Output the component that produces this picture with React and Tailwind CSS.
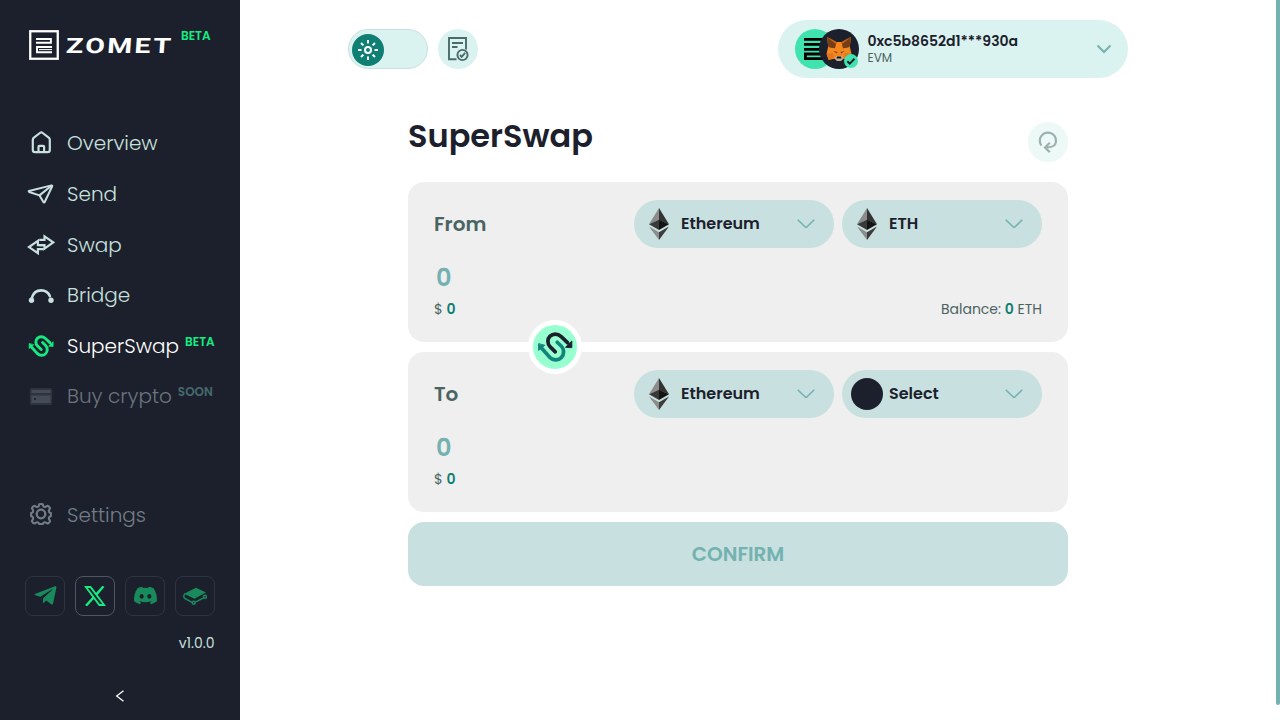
import React from 'react';
import { FaTelegramPlane, FaDiscord } from 'react-icons/fa';

function LogoMark() {
  return (
    <svg width="30" height="30" viewBox="0 0 30 30" fill="none" stroke="#fff">
      <rect x="1.25" y="1.25" width="27.5" height="27.5" strokeWidth="2.3" />
      <path d="M7 9h14.900v3.800H7M23 17H8v5.200h15" strokeWidth="1.900" />
      <path d="M10 19.600h13" strokeWidth="1" />
    </svg>
  );
}

function HomeIcon() {
  return (
    <svg width="28" height="28" viewBox="0 0 28 28" fill="none" stroke="currentColor" strokeWidth="2.200" strokeLinejoin="round">
      <path d="M5.800 11c0-1 .3-1.700 1.100-2.300l6-4.700c.9-.7 1.900-.7 2.800 0l6 4.700c.8.600 1.100 1.300 1.100 2.300V21c0 1.300-.9 2.200-2.200 2.200H8c-1.300 0-2.200-.9-2.200-2.200z" />
      <path d="M11.500 23v-5.200c0-.6.400-1 1-1h3.600c.6 0 1 .4 1 1V23" />
    </svg>
  );
}

function SendIcon() {
  return (
    <svg width="28" height="28" viewBox="0 0 28 28" fill="none" stroke="currentColor" strokeWidth="2" strokeLinejoin="round" strokeLinecap="round">
      <path d="M2 11 24.500 5.400c.6-.1.900.4.700.9L17.700 22c-.3.600-1 .5-1.300 0l-3.900-6.600L2.200 12c-.6-.2-.6-.8-.2-1z" />
      <path d="M12.500 15.400 24.400 5.700" />
    </svg>
  );
}

function SwapIcon() {
  return (
    <svg width="28" height="28" viewBox="0 0 28 28" fill="none" stroke="currentColor" strokeWidth="2.200" strokeLinejoin="miter">
      <path d="M12.200 8.900h5.300V5.300l8.700 6.100-8.700 6.200v-3.500H12" />
      <path d="M16.800 18.200h-5.900v4L2 16.100l8.900-6.300v4.300h6" />
    </svg>
  );
}

function BridgeIcon() {
  return (
    <svg width="28" height="28" viewBox="0 0 28 28" fill="none" stroke="currentColor" strokeWidth="2.600">
      <path d="M4.500 17.800C6 12 9.500 9.400 14.300 9.400c3.900 0 7 2 8.600 5.800" strokeLinecap="round" />
      <circle cx="4.500" cy="19.300" r="2.700" fill="currentColor" stroke="none" />
      <circle cx="24" cy="19.300" r="2.700" fill="currentColor" stroke="none" />
    </svg>
  );
}

function SuperSwapIcon({ size, top, bottom, weight }) {
  return (
    <svg width={size} height={size} viewBox="0 0 36 36" fill="none" strokeWidth={weight} strokeLinecap="round">
      <path d="M18.300 22.800 13.200 17.900C11.500 16.300 10.900 14.500 10.900 12.300C10.900 8.200 14.200 5.100 18.200 5.100C20.500 5.100 22.500 6 24.200 7.600L30.500 13.700" stroke={top} />
      <path d="M34.800 18.300V12l-6 6z" fill={top} stroke={top} strokeWidth="1" strokeLinejoin="round" />
      <path d="M20.200 13.200 24.400 17.300C25.900 18.800 26.600 20.500 26.600 22.700C26.600 27.200 23.300 30.900 19 30.900C16.500 30.900 14.500 30 12.700 28.200L4.700 19.300" stroke={bottom} />
      <path d="M1.600 15v6.400l6-4.900z" fill={bottom} stroke={bottom} strokeWidth="1" strokeLinejoin="round" />
    </svg>
  );
}

function CardIcon() {
  return (
    <svg width="28" height="28" viewBox="0 0 28 28">
      <rect x="2.800" y="6" width="22.400" height="17" rx="2" fill="#2e343f" />
      <path d="M4.500 8h19v3h-19zM4.500 13.500h19V21h-19z" fill="#454b57" />
      <rect x="7" y="16" width="1.800" height="1.800" fill="#1c202c" />
    </svg>
  );
}

function GearIcon() {
  return (
    <svg width="26" height="26" viewBox="1 2.300 26 26" fill="none" stroke="currentColor" strokeWidth="2.300" strokeLinejoin="round" className="ml-px -mt-0.5">
      <path d="M12 4.500q2-.8 4 0l.6 2.300q1.100 1 2.600.5l2.100-1.200q2 .8 2.800 2.800l-1.200 2.100q-.4 1.500.5 2.600l1.600.6v3.600l-1.700.6q-.9 1.100-.4 2.600l1.200 2.100q-.8 2-2.800 2.800l-2.100-1.200q-1.500-.5-2.600.5l-.6 1.300h-4l-.6-1.300q-1.100-1-2.600-.5l-2.100 1.200q-2-.8-2.800-2.800l1.200-2.100q.5-1.500-.4-2.600l-1.700-.6v-3.600l1.600-.6q.9-1.100.5-2.600L3.900 8.900q.8-2 2.800-2.800l2.100 1.200q1.500.5 2.600-.5z" transform="translate(1.400 1.530) scale(.9)" />
      <circle cx="14" cy="15.300" r="4.300" />
    </svg>
  );
}

function XIcon() {
  return (
    <svg width="22" height="20" viewBox="0 0 22 20" fill="none" stroke="currentColor">
      <path d="M1.900 1h4.600l13.600 18h-4.700z" strokeWidth="1.900" />
      <path d="M19.500.300 12.200 8.600M9.500 11.500 2 19.800" strokeWidth="2.400" />
    </svg>
  );
}

function GitbookIcon() {
  return (
    <svg width="24" height="18" viewBox="0 0 24 18" fill="none" stroke="currentColor" strokeWidth="1.500" strokeLinejoin="round">
      <path d="M1 6.800 13 .800l10 4.700L11.500 11.800z" fill="currentColor" stroke="none" />
      <path d="M2 7C.300 7.900.400 10.600 2 11.500l7 3.800M12.300 15.200l8.400-4.400" />
      <circle cx="10.700" cy="15.700" r="1.500" />
      <circle cx="22" cy="9.700" r="1.500" />
    </svg>
  );
}

function Eth() {
  return (
    <svg width="32" height="32" viewBox="0 0 32 32" className="shrink-0">
      <path d="m16 0-10 16.300L16 12z" fill="#8c8c8c" />
      <path d="m16 0 10 16.300L16 12z" fill="#343434" />
      <path d="M6 16.300 16 11.800v10.300z" fill="#393939" />
      <path d="M26 16.300 16 11.800v10.300z" fill="#141414" />
      <path d="m6 18.400 10 5.900V32z" fill="#8c8c8c" />
      <path d="m26 18.400-10 5.900V32z" fill="#3c3c3b" />
    </svg>
  );
}

function Chevron() {
  return (
    <svg width="18" height="10" viewBox="0 0 18 10" fill="none" stroke="#73b2b0" strokeWidth="1.600" strokeLinecap="round" strokeLinejoin="round" className="ml-auto">
      <path d="m1.200 1.200 6.800 6.600q1 .8 2 0l6.800-6.600" />
    </svg>
  );
}

function Fox() {
  return (
    <svg width="26" height="26" viewBox="0 0 26 26">
      <path d="M1 1 10.500 6h5L25 1l-1.200 9.500L25.500 18l-2 6-6-1.300-2.500 2h-4l-2.500-2L2.500 24l-2-6 1.700-7.500z" fill="#f6851b" />
      <path d="M1 .800 10.500 6 9 12.500l-5.300-.800-1.500-1.700zM25 .800 15.500 6 17 12.500l5.300-.800 1.500-1.700z" fill="#763d16" />
      <path d="m1 1 9.500 5-1 1.700zM25 1l-9.500 5 1 1.700z" fill="#c4661b" />
      <path d="M3.500 11.600 9 12.500 7 17l-6 1zM22.500 11.600 17 12.500l2 4.500 6 1z" fill="#f08a22" />
      <path d="m7 17 .8 5-5 1.800-2-6zM19 17l-.8 5 5 1.800 2-6z" fill="#e4761b" />
      <path d="m7.500 15 4 1-.8 1.500zM18.500 15l-4 1 .8 1.500z" fill="#5d4a35" />
      <path d="m8.500 22 2-2h5l2 2-2.500 3h-4z" fill="#c0ad9e" />
      <path d="M11 20.500h4l.5 2h-5z" fill="#161616" />
    </svg>
  );
}

function Select({ label, token }) {
  return (
    <button className="flex h-12 w-[200px] items-center rounded-full bg-[#c8e0df] pl-[9px] pr-[19px] text-[16px] font-semibold text-[#1c202c]">
      {token ? <Eth /> : <span className="h-8 w-8 shrink-0 rounded-full bg-[#1c202c]" />}
      <span className="ml-[6px]">{label}</span>
      <Chevron />
    </button>
  );
}

function SwapPanel({ title, asset, balance }) {
  return (
    <section className="h-[160px] rounded-[16px] bg-[#efefef] px-[26px] pt-[18px]">
      <div className="flex h-12 items-center">
        <h2 className="flex-1 text-[20px] font-semibold text-[#4a6462]">{title}</h2>
        <div className="flex gap-2">
          <Select label="Ethereum" token />
          <Select label={asset} token={asset === 'ETH'} />
        </div>
      </div>
      <div className="mt-[12px] flex h-9 items-center pl-[2px] text-[24px] font-semibold text-[#73b2b0]">0</div>
      <div className="mt-[3px] flex h-[20px] items-center justify-between text-[14px] text-[#4a6462]">
        <p>$ <b className="font-semibold text-[#0f7f73]">0</b></p>
        {balance && <p>Balance: <b className="font-semibold text-[#0f7f73]">0</b> ETH</p>}
      </div>
    </section>
  );
}

function NavItem({ icon, label, tone, badge, badgeTone }) {
  return (
    <a className={`flex h-[50.6px] items-center ${tone}`}>
      <span className="flex w-[40px] shrink-0">{icon}</span>
      <span className="text-[20px] font-light leading-[30px]">{label}</span>
      {badge && <span className={`mb-[8px] ml-[6px] text-[12px] font-semibold ${badgeTone}`}>{badge}</span>}
    </a>
  );
}

function Sidebar() {
  return (
    <aside className="flex h-full w-[240px] shrink-0 flex-col bg-[#1c202c]">
      <div className="flex h-[90px] items-start pl-[29px] pt-[30px]">
        <LogoMark />
        <div className="ml-[7px] w-[115px] pt-[4.500px]">
          <span className="block w-[70px] origin-left scale-x-[1.360] -skew-x-3 font-['Roboto',sans-serif] text-[21px] font-bold leading-[22px] tracking-[1.700px] text-white">ZOMET</span>
        </div>
        <span className="mt-[-3px] text-[12px] font-semibold leading-[18px] text-[#14ec82]">BETA</span>
      </div>
      <nav className="flex flex-col pl-[27px] pt-[28.100px]">
        <NavItem icon={<HomeIcon />} label="Overview" tone="text-[#c8e0df]" />
        <NavItem icon={<SendIcon />} label="Send" tone="text-[#c8e0df]" />
        <NavItem icon={<SwapIcon />} label="Swap" tone="text-[#c8e0df]" />
        <NavItem icon={<BridgeIcon />} label="Bridge" tone="text-[#c8e0df]" />
        <NavItem icon={<span className="pl-px"><SuperSwapIcon size={26} top="#14ec82" bottom="#14ec82" weight={4} /></span>} label="SuperSwap" tone="text-white" badge="BETA" badgeTone="text-[#14ec82]" />
        <NavItem icon={<CardIcon />} label="Buy crypto" tone="text-[#6c747e]" badge="SOON" badgeTone="text-[#456a6e]" />
        <div className="h-[68px]" />
        <NavItem icon={<GearIcon />} label="Settings" tone="text-[#727e87]" />
      </nav>
      <div className="mt-[35.400px] flex gap-[10px] px-[25px] text-[#198a5b]">
        <a className="flex h-10 w-10 items-center justify-center rounded-[8px] border border-[#303440]"><FaTelegramPlane size={25} /></a>
        <a className="flex h-10 w-10 items-center justify-center rounded-[8px] border border-[#515560] text-[#14ec82]"><XIcon /></a>
        <a className="flex h-10 w-10 items-center justify-center rounded-[8px] border border-[#303440]"><FaDiscord size={25} /></a>
        <a className="flex h-10 w-10 items-center justify-center rounded-[8px] border border-[#303440]"><GitbookIcon /></a>
      </div>
      <p className="mt-[17px] pr-[25.500px] text-right text-[14px] leading-[20px] text-[#c8e0df]">v1.0.0</p>
      <div className="mt-[37px] flex justify-center">
        <svg width="10" height="12" viewBox="0 0 10 12" fill="none" stroke="#fff" strokeWidth="1.300"><path d="M8.500.700 1.700 6l6.800 5.300" /></svg>
      </div>
    </aside>
  );
}

function Header() {
  return (
    <header className="flex h-[58px] w-[780px] items-center">
      <div className="flex h-10 w-20 items-center rounded-full border border-[#c8e0df] bg-[#daf3f0] pl-[3px]">
        <span className="mt-[2px] flex h-8 w-8 items-center justify-center rounded-full bg-[#0f7f73]">
          <svg width="20" height="20" viewBox="0 0 20 20" fill="none" stroke="#fff" strokeWidth="2">
            <circle cx="10" cy="10" r="3" />
            <path d="M10 0v3.500M10 16.500V20M0 10h3.500M16.500 10H20M3 3l2.400 2.400M14.600 14.600 17 17M17 3l-2.400 2.400M5.400 14.600 3 17" />
          </svg>
        </span>
      </div>
      <button className="ml-[10px] flex h-10 w-10 items-center justify-center rounded-full bg-[#daf3f0]">
        <svg width="22" height="26" viewBox="0 0 22 26" fill="none" stroke="#4a6b68" strokeWidth="1.900">
          <path d="M9.500 23.200H2V2h17v11.500M5 7h11M5 11h5.500" />
          <circle cx="15.500" cy="19" r="5.100" />
          <path d="m12.900 19 1.800 1.900 3.400-4" />
        </svg>
      </button>
      <button className="ml-auto flex h-[58px] w-[350px] items-center rounded-full bg-[#daf3f0] pl-[17px] pr-[16px]">
        <span className="flex w-[64px] shrink-0">
          <span className="flex h-10 w-10 shrink-0 items-center justify-center rounded-full bg-[#40e3ae]">
            <svg width="22" height="22" viewBox="0 0 22 22" fill="none" stroke="#000" strokeWidth="2.800">
              <path d="M0 1.400h22M0 6.400h22M0 11.300h22M22 16H1.400v4.600H22" />
            </svg>
          </span>
          <span className="relative -ml-4 flex h-10 w-10 shrink-0 items-center justify-center rounded-full bg-[#1c202c]">
            <Fox />
            <svg className="absolute bottom-[1px] right-[1px]" width="14" height="14" viewBox="0 0 14 14" fill="none">
              <circle cx="7" cy="7" r="7" fill="#40e3ae" />
              <path d="m3.300 7.300 2.500 2.300 4.700-4.800" stroke="#1c202c" strokeWidth="2" />
            </svg>
          </span>
        </span>
        <span className="ml-[8.500px] text-left">
          <span className="block text-[14px] font-semibold leading-[17px] text-[#1c202c]">0xc5b8652d1***930a</span>
          <span className="block text-[12px] leading-[15px] text-[#4a6462]">EVM</span>
        </span>
        <svg className="ml-auto" width="16" height="10" viewBox="0 0 16 10" fill="none" stroke="#73b2b0" strokeWidth="2"><path d="m1.500 1.500 6.500 6.500 6.500-6.500" /></svg>
      </button>
    </header>
  );
}

export default function App() {
  return (
    <div className="flex h-[720px] w-full overflow-hidden bg-white font-['Poppins','Inter',sans-serif]">
      <Sidebar />
      <main className="min-w-0 flex-1 pl-[108px] pt-5">
        <Header />
        <div className="ml-[60px] w-[660px]">
          <div className="flex h-[104px] items-start justify-between pt-[38px]">
            <h1 className="text-[32px] font-semibold leading-[40px] text-[#1c202c]">SuperSwap</h1>
            <button className="mt-[6px] flex h-10 w-10 items-center justify-center rounded-full bg-[#ecf9f7]">
              <svg width="22" height="26" viewBox="0 0 22 26" fill="none" stroke="#9cb0ad" strokeWidth="2.200">
                <path d="M4.400 16.500A8.100 8.100 0 1 1 18 15.500C16.300 18 12.500 18.500 8.500 18.500M12.800 13.700 8 18.500l4.800 4.800" />
              </svg>
            </button>
          </div>
          <div className="relative flex flex-col gap-[10px]">
            <SwapPanel title="From" asset="ETH" balance />
            <SwapPanel title="To" asset="Select" />
            <button className="absolute left-[120px] top-[138px] flex h-[54px] w-[54px] items-center justify-center rounded-full border-[5px] border-white bg-[#98ffd0]">
              <SuperSwapIcon size={36} top="#1c202c" bottom="#12857a" weight={3.7} />
            </button>
          </div>
          <button className="mt-[10px] flex h-16 w-full items-center justify-center rounded-[16px] bg-[#c8e0df] text-[20px] font-semibold text-[#73b2b0]">CONFIRM</button>
        </div>
      </main>
      <div className="h-[705px] w-1 shrink-0 rounded-b-[2px] bg-[#73b2b0]" />
    </div>
  );
}
